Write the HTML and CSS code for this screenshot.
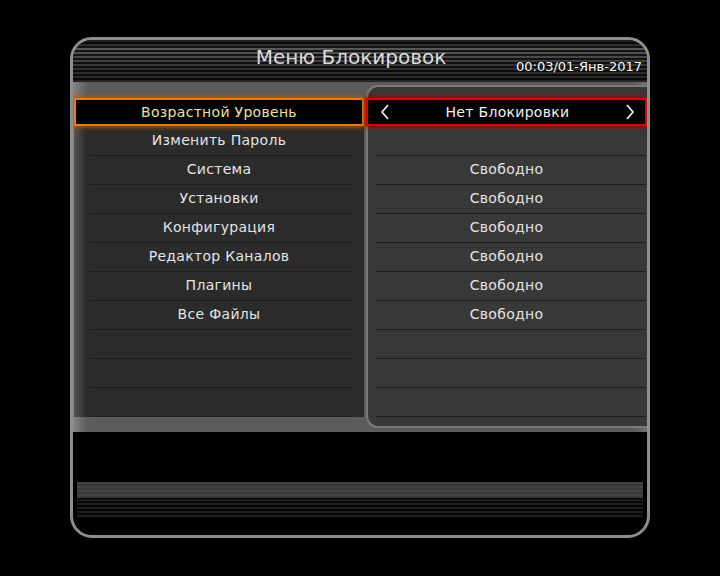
FILE: index.html
```html
<!DOCTYPE html>
<html lang="ru">

<head>
    <meta charset="UTF-8">
    <meta name="viewport" content="width=device-width, initial-scale=1.0">
    <title>Меню Блокировок</title>
    <link rel="stylesheet" href="styles.css">
</head>

<body>
    <div class="frame">
        <div class="header">
            <h1 class="title">Меню Блокировок</h1>
            <div class="clock">00:03/01-Янв-2017</div>
        </div>

        <div class="panel">
            <ul class="menu">
                <li class="row selected">Возрастной Уровень</li>
                <li class="row">Изменить Пароль</li>
                <li class="row">Система</li>
                <li class="row">Установки</li>
                <li class="row">Конфигурация</li>
                <li class="row">Редактор Каналов</li>
                <li class="row">Плагины</li>
                <li class="row">Все Файлы</li>
                <li class="row"></li>
                <li class="row"></li>
                <li class="row"></li>
            </ul>
            <div class="values">
                <ul class="menu">
                    <li class="row choice">
                        <svg class="arrow" width="10" height="16" viewBox="0 0 10 16"><polyline points="8,1 2,8 8,15" /></svg>
                        <span>Нет Блокировки</span>
                        <svg class="arrow" width="10" height="16" viewBox="0 0 10 16"><polyline points="2,1 8,8 2,15" /></svg>
                    </li>
                    <li class="row"></li>
                    <li class="row">Свободно</li>
                    <li class="row">Свободно</li>
                    <li class="row">Свободно</li>
                    <li class="row">Свободно</li>
                    <li class="row">Свободно</li>
                    <li class="row">Свободно</li>
                    <li class="row"></li>
                    <li class="row"></li>
                    <li class="row"></li>
                </ul>
            </div>
        </div>

        <div class="info"></div>
        <div class="footer"></div>
    </div>
</body>

</html>
```

FILE: styles.css
```css
body {
    margin: 0;
    background-color: #000;
    font-family: "DejaVu Sans", sans-serif;
    color: #e4e4e4;
}

.frame {
    width: 574px;
    height: 495px;
    margin: 37px 0 0 70px;
    border: 3px solid #8e8e8e;
    border-radius: 22px;
    display: flex;
    flex-direction: column;
    overflow: hidden;
}

/* header with striped background */
.header {
    height: 42px;
    padding: 0 4px 0 4px;
    display: grid;
    border-radius: 18px 18px 0 0;
    background:
        repeating-linear-gradient(to bottom, transparent 0 2px, rgba(0, 0, 0, 0.75) 2px 4px),
        linear-gradient(to bottom, #1a1a1a 0, #2c2c2c 5px, #5a5a5a 8px, #4a4a4a 16px, #2e2e2e 30px, #242424 42px);
}

.title {
    grid-area: 1 / 1;
    justify-self: center;
    align-self: start;
    margin: 5px 18px 0 0;
    font-size: 20px;
    font-weight: normal;
    color: #dcdcdc;
}

.clock {
    grid-area: 1 / 1;
    justify-self: end;
    align-self: end;
    margin-bottom: 8px;
    font-size: 13px;
    color: #fff;
    padding: 0 1px;
    text-shadow: 0 0 2px #000;
}

.panel {
    height: 347px;
    padding: 3px 0 0 1px;
    display: grid;
    grid-template-columns: 290px 1fr;
    gap: 2px;
    align-items: start;
    background: linear-gradient(to right, #858585 0, #5c5c5c 14px, #5c5c5c 560px, #6e6e6e 572px);
}

.menu {
    list-style: none;
    margin: 0;
    padding: 0;
}

.panel > .menu {
    margin-top: 13px;
    background: linear-gradient(to right, #555 0, #2b2b2b 12px);
}

.values {
    height: 328px;
    border: 2px solid #7a7a7a;
    border-right: none;
    border-radius: 12px 0 0 12px;
    padding-top: 11px;
    background-color: #383838;
}

.values .menu {
    margin-left: -2px;
}

.row {
    height: 29px;
    box-sizing: border-box;
    display: flex;
    align-items: center;
    justify-content: center;
    font-size: 14px;
    letter-spacing: 0.3px;
    padding-bottom: 3px;
    background-image: linear-gradient(#1c1c1c, #1c1c1c);
    background-size: calc(100% - 28px) 1px;
    background-position: 16px 100%;
    background-repeat: no-repeat;
}

.values .row {
    background-size: calc(100% - 12px) 1px;
    background-position: 10px 100%;
}

.row.selected {
    background: #000;
    border: 2px solid #e67d12;
    box-shadow: 0 0 5px 1px #b85a00;
    color: #ebe2a2;
    height: 28px;
    margin-bottom: 1px;
    padding-bottom: 1px;
}

.values .row.choice {
    background: #000;
    border: 2px solid #e00000;
    box-shadow: 0 0 5px 1px #a00000;
    color: #f2f2f2;
    height: 28px;
    margin-bottom: 1px;
    padding: 0 10px 1px 12px;
    justify-content: space-between;
}

.arrow polyline {
    fill: none;
    stroke: #e8e8e8;
    stroke-width: 1.8;
}

.info {
    height: 50px;
    background-color: #000;
}

.footer {
    height: 36px;
    margin: 0 4px 0 4px;
    background:
        linear-gradient(to bottom, transparent 0 16px, #000 16px 36px),
        repeating-linear-gradient(to bottom, #444 0 2px, #383838 2px 4px),
        #000;
    background-size: 100% 100%, 100% 16px, 100% 100%;
    background-repeat: no-repeat;
    position: relative;
}

.footer::after {
    content: "";
    display: block;
    height: 19px;
    margin-top: 17px;
    background: repeating-linear-gradient(to bottom, #1e1e1e 0 2px, #050505 2px 4px);
}
```
